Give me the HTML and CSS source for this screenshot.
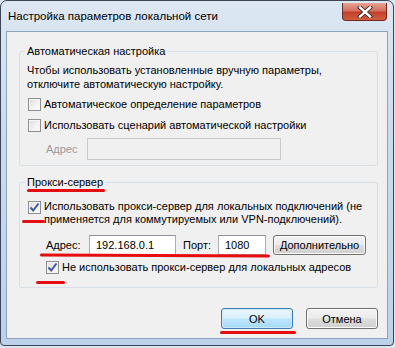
FILE: index.html
```html
<!DOCTYPE html>
<html lang="ru">
<head>
    <meta charset="UTF-8">
    <title>Настройка параметров локальной сети</title>
    <link rel="stylesheet" href="styles.css">
</head>
<body>
    <div class="window">
        <div class="titlebar">
            <span class="title">Настройка параметров локальной сети</span>
            <div class="close-btn">
                <svg width="16" height="12" viewBox="0 0 16 12">
                    <path d="M3 1.5 L13 10.5 M13 1.5 L3 10.5" stroke="#3a2a2a" stroke-width="4.2" stroke-linecap="square"/>
                    <path d="M3 1.5 L13 10.5 M13 1.5 L3 10.5" stroke="#ffffff" stroke-width="2.4" stroke-linecap="square"/>
                </svg>
            </div>
        </div>
        <div class="client">
            <fieldset class="group group-auto">
                <legend>Автоматическая настройка</legend>
                <p class="hint">Чтобы использовать установленные вручную параметры,<br>отключите автоматическую настройку.</p>
                <label class="check-row"><span class="check"></span>Автоматическое определение параметров</label>
                <label class="check-row"><span class="check"></span>Использовать сценарий автоматической настройки</label>
                <div class="addr-row disabled">
                    <span class="addr-label">Адрес</span>
                    <span class="field field-script"></span>
                </div>
            </fieldset>

            <fieldset class="group group-proxy">
                <legend>Прокси-сервер</legend>
                <label class="check-row multi">
                    <span class="check checked"><svg width="11" height="11" viewBox="0 0 11 11"><path d="M1.5 5.5 L4.2 8.5 L9.5 1.5" fill="none" stroke="#3d58a8" stroke-width="2"/></svg></span>
                    <span>Использовать прокси-сервер для локальных подключений (не<br>применяется для коммутируемых или VPN-подключений).</span>
                </label>
                <div class="addr-row">
                    <span class="addr-label">Адрес:</span>
                    <span class="field field-host">192.168.0.1</span>
                    <span class="port-label">Порт:</span>
                    <span class="field field-port">1080</span>
                    <button class="btn btn-more">Дополнительно</button>
                </div>
                <label class="check-row indent">
                    <span class="check checked"><svg width="11" height="11" viewBox="0 0 11 11"><path d="M1.5 5.5 L4.2 8.5 L9.5 1.5" fill="none" stroke="#3d58a8" stroke-width="2"/></svg></span>
                    Не использовать прокси-сервер для локальных адресов
                </label>
            </fieldset>

            <div class="dialog-buttons">
                <button class="btn btn-default">OK</button>
                <button class="btn">Отмена</button>
            </div>
        </div>

        <!-- пометки красным -->
        <div class="mark mark-legend"></div>
        <div class="mark mark-check"></div>
        <div class="mark mark-addr"></div>
        <div class="mark mark-local"></div>
        <div class="mark mark-ok"></div>
    </div>
</body>
</html>
```

FILE: styles.css
```css
body {
    margin: 0;
    padding: 0;
    background-color: #dfe5ec;
    font-family: "Liberation Sans", Arial, sans-serif;
    font-size: 11px;
    color: #000;
}

.window {
    position: relative;
    width: 392px;
    height: 344px;
    border: 1px solid #3b4756;
    border-radius: 7px 7px 4px 4px;
    background: linear-gradient(180deg, #dce7f2 0%, #c9dbee 40%, #bcd2ea 100%);
    display: flex;
    flex-direction: column;
}

.titlebar {
    height: 30px;
    display: flex;
    justify-content: space-between;
    align-items: flex-start;
}

.title {
    margin: 9px 0 0 7px;
    font-size: 11.5px;
    white-space: nowrap;
}

.close-btn {
    width: 43px;
    height: 17px;
    margin: 2px 6px 0 0;
    border: 1px solid #6d2a22;
    border-top: none;
    border-radius: 0 0 4px 4px;
    background: linear-gradient(180deg, #e8a493 0%, #d47160 45%, #c2412c 55%, #d35c3e 100%);
    display: flex;
    justify-content: center;
    align-items: center;
}

.client {
    flex: 1;
    margin: 0 5px 6px 5px;
    background-color: #f0f0f0;
    border: 1px solid #8ea2b8;
    padding: 13px 9px 0 12px;
    white-space: nowrap;
}

/* Групповые рамки */
.group {
    margin: 0;
    border: 1px solid #d5dfe5;
    border-radius: 3px;
    padding: 0 8px 8px 7px;
}

.group legend {
    padding: 0 2px;
    margin-left: -2px;
}

.group-auto {
    height: 111px;
}

.group-proxy {
    margin-top: 10px;
    height: 102px;
}

.hint {
    margin: 6px 0 0 0;
    line-height: 14px;
}

.check-row {
    display: flex;
    align-items: center;
    margin-top: 7px;
    line-height: 14px;
}

.hint + .check-row {
    margin-top: 6px;
}

.check-row.multi {
    align-items: flex-start;
    margin-top: 12px;
    line-height: 13px;
}

.check-row.indent {
    margin-left: 18px;
    margin-top: 5px;
}

.check {
    width: 11px;
    height: 11px;
    flex: none;
    margin: 0 3px 0 1px;
    border: 1px solid #8e8f8f;
    background: linear-gradient(135deg, #dcdcdc 0%, #f4f4f4 60%, #fbfbfb 100%);
    box-shadow: inset 0 0 0 1px #f4f4f4;
    display: flex;
    align-items: center;
    justify-content: center;
}

.check-row.multi .check {
    margin-top: 1px;
}

.addr-row {
    display: flex;
    align-items: center;
    margin-top: 6px;
}

.group-proxy .addr-row {
    margin-top: 9px;
}

.addr-row .addr-label {
    margin-left: 19px;
    width: 41px;
}

.disabled .addr-label {
    color: #9a9a9a;
}

.field {
    height: 20px;
    border: 1px solid #abadb3;
    border-top-color: #8e939b;
    background-color: #fff;
    line-height: 20px;
    padding-left: 6px;
    box-sizing: content-box;
}

.group-proxy .field {
    height: 18px;
    line-height: 18px;
}

.field-script {
    width: 186px;
    background-color: #f0f0f0;
    border-color: #c9cacd;
}

.field-host {
    width: 79px;
    margin-left: 2px;
}

.port-label {
    margin-left: 7px;
    width: 35px;
}

.field-port {
    width: 40px;
}

.btn {
    font-family: "Liberation Sans", Arial, sans-serif;
    font-size: 11px;
    color: #000;
    height: 21px;
    padding: 0;
    border: 1px solid #707070;
    border-radius: 3px;
    background: linear-gradient(180deg, #f2f2f2 0%, #ebebeb 48%, #dddddd 52%, #cfcfcf 100%);
    box-shadow: inset 0 0 0 1px #fcfcfc;
}

.btn-more {
    width: 93px;
    height: 20px;
    margin-left: 7px;
}

.dialog-buttons {
    display: flex;
    justify-content: flex-end;
    gap: 13px;
    margin-top: 20px;
}

.dialog-buttons .btn {
    width: 72px;
}

.btn-default {
    border-color: #3c7fb1;
    background: linear-gradient(180deg, #eaf6fd 0%, #d9f0fc 48%, #bee6fd 52%, #a7d9f5 100%);
    box-shadow: inset 0 0 0 1px #cbe8f8;
}

/* Красные пометки поверх окна */
.mark {
    position: absolute;
    height: 3px;
    border-radius: 2px;
    background-color: #e50d0d;
}

.mark-legend { left: 26px; top: 188px; width: 78px; }
.mark-check  { left: 21px; top: 219px; width: 23px; }
.mark-addr   { left: 39px; top: 253px; width: 230px; transform: rotate(0.3deg); }
.mark-local  { left: 35px; top: 280px; width: 29px; }
.mark-ok     { left: 219px; top: 330px; width: 76px; }
```
